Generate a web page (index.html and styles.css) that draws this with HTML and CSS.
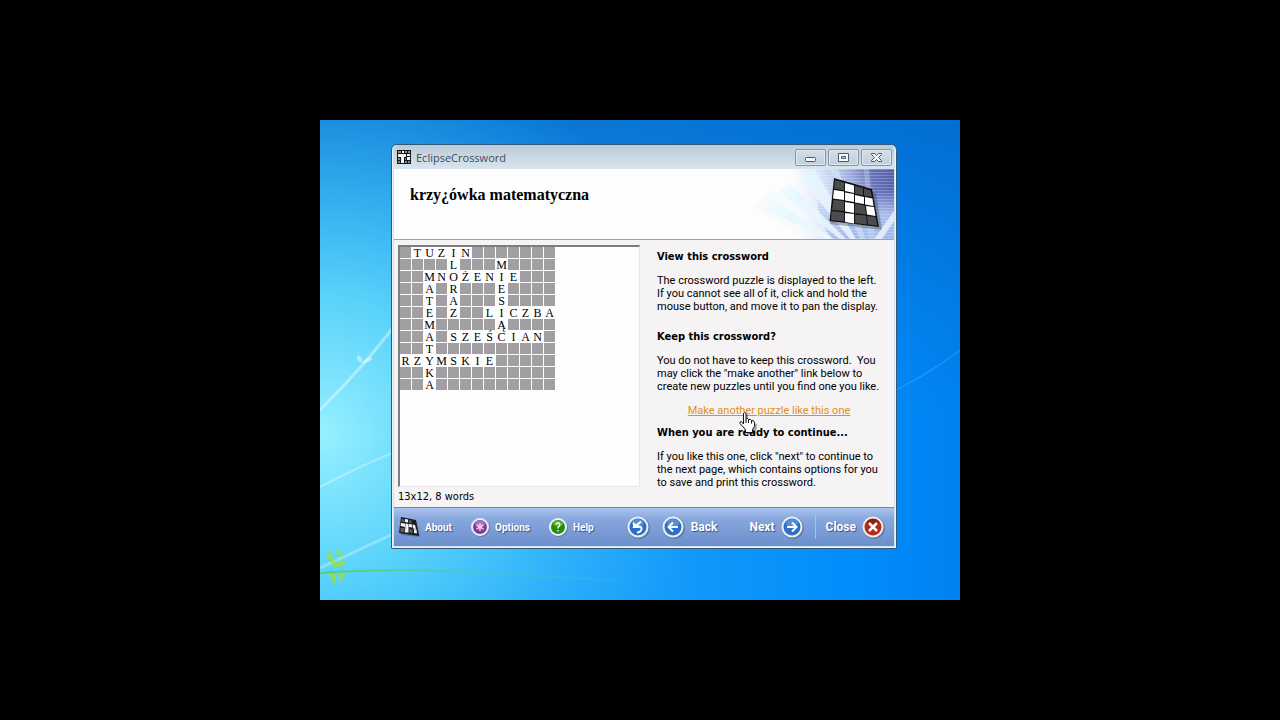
FILE: index.html
```
<!DOCTYPE html>
<html lang="en">
<head>
    <meta charset="UTF-8">
    <meta name="viewport" content="width=device-width, initial-scale=1.0">
    <title>EclipseCrossword</title>
    <link rel="stylesheet" href="styles.css">
</head>
<body>
    <div class="desktop">
        <svg class="wallpaper" viewBox="0 0 640 480" preserveAspectRatio="none" aria-hidden="true">
            <defs>
                <linearGradient id="sky" x1="0" y1="0" x2="1" y2="0">
                    <stop offset="0" stop-color="#27a9f0"/>
                    <stop offset="0.5" stop-color="#169cfa"/>
                    <stop offset="0.85" stop-color="#008cfa"/>
                    <stop offset="1" stop-color="#0082f0"/>
                </linearGradient>
                <linearGradient id="top-shade" x1="0" y1="0" x2="0" y2="1">
                    <stop offset="0" stop-color="#0464c4" stop-opacity="0.7"/>
                    <stop offset="0.6" stop-color="#0468c8" stop-opacity="0"/>
                </linearGradient>
                <radialGradient id="glow" gradientUnits="userSpaceOnUse" cx="0" cy="315" r="400">
                    <stop offset="0" stop-color="#98f0ff"/>
                    <stop offset="0.35" stop-color="#60d8fc" stop-opacity="0.9"/>
                    <stop offset="1" stop-color="#30b8ff" stop-opacity="0"/>
                </radialGradient>
                <linearGradient id="stem" x1="0" y1="0" x2="1" y2="0">
                    <stop offset="0" stop-color="#5fce6c"/>
                    <stop offset="1" stop-color="#3cc4dc" stop-opacity="0"/>
                </linearGradient>
            </defs>
            <rect width="640" height="480" fill="url(#sky)"/>
            <rect width="640" height="480" fill="url(#top-shade)"/>
            <rect width="640" height="480" fill="url(#glow)"/>
            <path d="M0 290 Q45 245 75 205" stroke="#fff" stroke-width="3" fill="none" opacity="0.4"/>
            <path d="M42 243 Q34 240 38 235 Q43 236 42 243 Q46 236 53 238 Q50 243 42 243Z" fill="#fff" opacity="0.45"/>
            <path d="M0 367 Q40 346 75 332" stroke="#fff" stroke-width="2" fill="none" opacity="0.3"/>
            <path d="M0 448 Q30 434 75 413" stroke="#fff" stroke-width="3" fill="none" opacity="0.3"/>
            <path d="M576 270 Q615 250 640 230" stroke="#8fd0ff" fill="none" opacity="0.35"/>
            <path d="M0 453 Q80 447 190 454 T340 462" stroke="url(#stem)" stroke-width="2" fill="none"/>
            <g fill="#9be23c" opacity="0.85">
                <path d="M16 447 Q6 440 7 431 Q15 436 16 447Z"/>
                <path d="M20 437 Q15 433 17 427 L21 434 L26 436Z"/>
                <path d="M12 447 Q18 439 27 441 Q24 447 12 447Z"/>
                <path d="M9 453 L16 455 L15 466Z"/>
                <path d="M18 453 L25 454 L20 463Z"/>
            </g>
        </svg>

        <div class="window">
            <div class="titlebar">
                <svg class="app-icon" width="14" height="14" viewBox="0 0 14 14" aria-hidden="true">
                    <rect width="14" height="14" fill="#15171a"/>
                    <path d="M5 1h2v2H5zM7 4h2v3H7zM1 4h3v3H1zM4 4h3v9H4zM10 4h3v2h-3zM10 7h3v3h-3z" fill="#f4f4f4"/>
                    <path d="M1 1h3v2H1zM8 1h2v2H8zM11 1h2v2h-2zM1 8h2v2H1zM8 8h1v2H8zM1 11h2v2H1zM8 11h2v2H8zM11 11h2v2h-2z" fill="#8a8a8c"/>
                </svg>
                <span class="window-title">EclipseCrossword</span>
                <div class="window-controls">
                    <button aria-label="Minimize">
                        <svg width="13" height="11" viewBox="0 0 13 11"><rect x="1.5" y="5.5" width="10" height="4" rx="1" fill="#f6f9fb" stroke="#4b5866"/></svg>
                    </button>
                    <button aria-label="Maximize">
                        <svg width="13" height="11" viewBox="0 0 13 11"><path d="M1.5 1.5h10v8h-10z" fill="#f6f9fb" stroke="#4b5866"/><path d="M4.5 4.5h4v2h-4z" fill="#c8d6e2" stroke="#4b5866"/></svg>
                    </button>
                    <button aria-label="Close window">
                        <svg width="13" height="11" viewBox="0 0 13 11"><path d="M1.5 1.5h3l2 2 2-2h3v1l-3 3 3 3v1h-3l-2-2-2 2h-3v-1l3-3-3-3z" fill="#f6f9fb" stroke="#4b5866"/></svg>
                    </button>
                </div>
            </div>

            <div class="client">
                <header class="banner">
                    <h1>krzy¿ówka matematyczna</h1>
                    <svg class="banner-art" width="160" height="70" viewBox="0 0 160 70" aria-hidden="true">
                        <defs>
                            <linearGradient id="art-fade" gradientUnits="userSpaceOnUse" x1="60" y1="30" x2="160" y2="10">
                                <stop offset="0" stop-color="#c9dcfa" stop-opacity="0"/>
                                <stop offset="0.45" stop-color="#a9bdec" stop-opacity="0.8"/>
                                <stop offset="0.8" stop-color="#6672b8"/>
                                <stop offset="1" stop-color="#5660aa"/>
                            </linearGradient>
                            <linearGradient id="art-low" x1="0" y1="0" x2="0" y2="1">
                                <stop offset="0.3" stop-color="#b4caf4" stop-opacity="0"/>
                                <stop offset="0.65" stop-color="#b4caf4" stop-opacity="0.85"/>
                                <stop offset="1" stop-color="#9fb8ea"/>
                            </linearGradient>
                            <linearGradient id="ray" gradientUnits="userSpaceOnUse" x1="20" y1="20" x2="100" y2="60">
                                <stop offset="0" stop-color="#e4fbff" stop-opacity="0"/>
                                <stop offset="0.5" stop-color="#e4f6ff" stop-opacity="0.8"/>
                                <stop offset="1" stop-color="#f2f8ff" stop-opacity="0.8"/>
                            </linearGradient>
                            <pattern id="scan" width="4" height="3" patternUnits="userSpaceOnUse">
                                <rect width="4" height="1" fill="#fff" opacity="0.22"/>
                            </pattern>
                        </defs>
                        <path d="M60 0H160V70H60z" fill="url(#art-fade)"/>
                        <path d="M90 0H160V70H98Q74 40 90 0z" fill="url(#art-low)"/>
                        <path d="M60 0H160V70H60z" fill="url(#scan)"/>
                        <path d="M20 38L36 22L60 18L110 70H70z" fill="#d9f4fc" opacity="0.15"/>
                        <g fill="url(#ray)">
                            <path d="M116 70L66 8L80 0L122 70z"/>
                            <path d="M106 70L44 22L56 14L112 70z"/>
                            <path d="M92 70L30 40L38 30L100 70z"/>
                        </g>
                        <path d="M126 70L96 0h8l28 70z" fill="#dfeafc" opacity="0.5"/>
                        <path d="M134 70L130 0h5l6 70z" fill="#dfeafc" opacity="0.3"/>
                        <path d="M140 70L160 42V52L148 70z" fill="#eef5ff" opacity="0.8"/>
                        <path d="M101 11L142 24L148 61L96 55z" fill="#223" opacity="0.3"/>
                        <path d="M100 9L138 20L145 58L95.5 52z" fill="#111"/>
                        <path d="M101 11L110 13.5V21.5L100 19.5zM121 17L129 19V26.5L121 24.5zM130 19.5L136.5 21.5L138 28L130 26.5zM99.5 31L110 32V42L98 41zM121 34.5L131 36.5L132 45.5L121 44zM97.5 42L110 43.5V52.5L97 51zM121 45.5L132 46.5L133 55.5L121 54zM133 47L141.5 48L143.5 56.5L134 55.5z" fill="#4c4c4e"/>
                        <path d="M111 14L120 16.5V24L111 22zM100 21L110 22.5V31L99 29.5zM111 23.5L120 25V33L111 31.5zM121 26L130 28V35L121 33.5zM131 28L138.5 29.5L139.5 37L131 35.5zM111 33L120 34.5V44L111 42.5zM132 37L140 38L141.5 47L133 45.5zM111 44L120 45V54.5L111 53z" fill="#fff"/>
                    </svg>
                </header>

                <main class="content">
                    <section class="preview">
                        <div class="canvas">
                            <table class="crossword" id="crossword"></table>
                        </div>
                        <p class="status">13x12, 8 words</p>
                    </section>

                    <section class="info">
                        <h2>View this crossword</h2>
                        <p>The crossword puzzle is displayed to the left.<br>If you cannot see all of it, click and hold the<br>mouse button, and move it to pan the display.</p>
                        <h2>Keep this crossword?</h2>
                        <p>You do not have to keep this crossword.&nbsp; You<br>may click the "make another" link below to<br>create new puzzles until you find one you like.</p>
                        <div class="another">
                            <a href="#">Make another puzzle like this one</a>
                            <svg class="cursor" width="20" height="24" viewBox="0 0 20 24" aria-hidden="true">
                                <path d="M6 4Q8 2 9 4V10L18 13V17L16 23H9L4 16z" fill="#000" opacity="0.3"/>
                                <path d="M4.5 13V2.5Q5.5 .5 7 2.5V8Q8.5 6.5 9.5 8.5Q11.5 7.5 12.5 9.5Q15 9 15.5 11.5V15.5L13.5 18.5V21.5H6.5V18.5L1 12.5Q0.5 10.5 2.5 10.5z" fill="#fff" stroke="#111"/>
                                <path d="M7 8v4M9.5 8.5V12M12.5 9.5V12.5" stroke="#111" fill="none"/>
                            </svg>
                        </div>
                        <h2>When you are ready to continue...</h2>
                        <p>If you like this one, click "next" to continue to<br>the next page, which contains options for you<br>to save and print this crossword.</p>
                    </section>
                </main>

                <footer class="toolbar">
                    <div class="tools">
                        <button>
                            <svg width="21" height="22" viewBox="0 0 21 22" aria-hidden="true">
                                <path d="M2 3L18 6L21 21L2 19z" fill="#234" opacity="0.35"/>
                                <path d="M2 1L17 4L20 20L0 17z" fill="#1b1d20"/>
                                <path d="M6 3l3 .5v3L6 6zM2 7l4 .5v3.5L1.5 10zM6.5 7.5l3 .5v8.5H6zM10 8l3 .5v3L10 11zM13.5 8.5l2.5.5 1 4-3-.5zM15 13l2.5.5.5 4-3-.5z" fill="#f2f2f2"/>
                                <path d="M10 4l2.5.5v3L10 7zM2.5 3L5.5 3.5V6L2.5 5.5zM1.5 12h4v4h-4zM10.5 13l3 .5V17l-3-.5z" fill="#5b6068"/>
                            </svg>
                            About
                        </button>
                        <button>
                            <svg width="19" height="22" viewBox="0 0 19 22" aria-hidden="true">
                                <circle cx="10" cy="12" r="9" fill="#345" opacity="0.35"/>
                                <circle cx="9" cy="11" r="8" fill="#7b3d98" stroke="#f1edf5" stroke-width="2"/>
                                <ellipse cx="9" cy="7.5" rx="5" ry="3" fill="#c39ad4" opacity="0.6"/>
                                <path d="M9 7v8M5.5 9l7 4M12.5 9l-7 4" stroke="#f0c8f4" stroke-width="1.5"/>
                            </svg>
                            Options
                        </button>
                        <button>
                            <svg width="19" height="22" viewBox="0 0 19 22" aria-hidden="true">
                                <circle cx="10" cy="12" r="9" fill="#345" opacity="0.35"/>
                                <circle cx="9" cy="11" r="8" fill="#278a12" stroke="#f1f5ed" stroke-width="2"/>
                                <ellipse cx="9" cy="7.5" rx="5" ry="3" fill="#9ad66c" opacity="0.5"/>
                                <path d="M7 8.5Q7.5 6.5 9.5 7Q11.5 8 10.5 9.5L9 11.5V12.5M9 14v1.5" stroke="#e8ffd8" stroke-width="1.5" fill="none"/>
                            </svg>
                            Help
                        </button>
                    </div>

                    <div class="nav">
                        <button aria-label="Start over">
                            <svg width="23" height="24" viewBox="0 0 23 24" aria-hidden="true">
                                <circle cx="12" cy="13" r="11" fill="#345" opacity="0.35"/>
                                <circle cx="11" cy="12" r="9.5" fill="#2c6ec8" stroke="#eceeec" stroke-width="2"/>
                                <ellipse cx="11" cy="8" rx="6" ry="4" fill="#8fbdf0" opacity="0.4"/>
                                <path d="M14 6.5L8 11.5H12Q15 12 14.5 14.5Q13.5 17.5 10 17.5" stroke="#fff" stroke-width="2" fill="none"/>
                                <path d="M6 6.500V13H12.500z" fill="#fff"/>
                            </svg>
                        </button>
                        <button class="back">
                            <svg width="23" height="24" viewBox="0 0 23 24" aria-hidden="true">
                                <circle cx="12" cy="13" r="11" fill="#345" opacity="0.35"/>
                                <circle cx="11" cy="12" r="9.5" fill="#2c6ec8" stroke="#eceeec" stroke-width="2"/>
                                <ellipse cx="11" cy="8" rx="6" ry="4" fill="#8fbdf0" opacity="0.4"/>
                                <path d="M16 12H7M11 7.5L6.5 12L11 16.5" stroke="#fff" stroke-width="2" fill="none"/>
                            </svg>
                            Back
                        </button>
                        <button class="next">
                            Next
                            <svg width="23" height="24" viewBox="0 0 23 24" aria-hidden="true">
                                <circle cx="12" cy="13" r="11" fill="#345" opacity="0.35"/>
                                <circle cx="11" cy="12" r="9.5" fill="#2c6ec8" stroke="#eceeec" stroke-width="2"/>
                                <ellipse cx="11" cy="8" rx="6" ry="4" fill="#8fbdf0" opacity="0.4"/>
                                <path d="M6 12H15M11 7.5L15.5 12L11 16.5" stroke="#fff" stroke-width="2" fill="none"/>
                            </svg>
                        </button>
                        <button class="close">
                            Close
                            <svg width="23" height="24" viewBox="0 0 23 24" aria-hidden="true">
                                <circle cx="12" cy="13" r="11" fill="#345" opacity="0.35"/>
                                <circle cx="11" cy="12" r="9.5" fill="#b42a18" stroke="#eceeec" stroke-width="2"/>
                                <ellipse cx="11" cy="7.5" rx="6" ry="3.5" fill="#6d1208" opacity="0.5"/>
                                <path d="M7 8L15 16M15 8L7 16" stroke="#fff" stroke-width="2.5" fill="none"/>
                            </svg>
                        </button>
                    </div>
                </footer>
            </div>
        </div>
    </div>

    <script>
        // "." is a filled square
        const rows = [
            '.TUZIN.......',
            '....L...M....',
            '..MNOŻENIE...',
            '..A.R...E....',
            '..T.A...S....',
            '..E.Z..LICZBA',
            '..M.....Ą....',
            '..A.SZEŚCIAN.',
            '..T..........',
            'RZYMSKIE.....',
            '..K..........',
            '..A..........'
        ];

        document.getElementById('crossword').innerHTML = rows
            .map(row => '<tr>' + [...row]
                .map(c => c === '.' ? '<td class="filled"></td>' : `<td>${c}</td>`)
                .join('') + '</tr>')
            .join('');
    </script>
</body>
</html>
```
FILE: styles.css
```
* {
    box-sizing: border-box;
}

body {
    margin: 0;
    min-height: 100vh;
    display: flex;
    align-items: center;
    justify-content: center;
    background: #000;
    font-family: "DejaVu Sans Condensed", "DejaVu Sans", sans-serif;
    font-size: 11px;
    line-height: 13px;
    color: #000;
}

h1, h2, p {
    margin: 0;
}

button {
    margin: 0;
    padding: 0;
    border: 0;
    background: none;
    cursor: pointer;
}

svg {
    display: block;
    flex: none;
}

.desktop {
    position: relative;
    width: 50%;
    min-width: 640px;
    aspect-ratio: 4 / 3;
    overflow: hidden;
}

.wallpaper {
    width: 100%;
    height: 100%;
}

.window {
    position: absolute;
    left: 71px;
    top: 24px;
    width: 506px;
    padding: 0 2px 2px;
    border: 1px solid #34587a;
    border-radius: 6px 6px 1px 1px;
    background: #d3e2ee;
    box-shadow: inset 0 0 0 1px #eaf4fa;
}

/* title bar */
.titlebar {
    display: flex;
    align-items: center;
    height: 24px;
    padding: 0 2px 0 3px;
    background: linear-gradient(#bccbd8, #d8e5ee);
    border-radius: 5px 5px 0 0;
}

.window-title {
    margin-left: 5px;
    font-family: "Open Sans", "Noto Sans", sans-serif;
    color: #3f4c5c;
}

.window-controls {
    display: flex;
    gap: 2px;
    margin-left: auto;
}

.window-controls button {
    display: flex;
    align-items: center;
    justify-content: center;
    width: 31px;
    height: 17px;
    border: 1px solid #8495a6;
    border-radius: 2px;
    background: linear-gradient(#d3dfe9, #bfcfdd);
    box-shadow: inset 0 0 0 1px #dde8f0;
}

/* banner */
.client {
    background: #f5f3f4;
}

.banner {
    display: flex;
    justify-content: space-between;
    background: #fefdfe;
    border-bottom: 1px solid #9ba3a8;
}

.banner h1 {
    padding: 16px 0 0 16px;
    font-family: "Liberation Serif", serif;
    font-size: 16px;
    line-height: 20px;
}

/* crossword and help text */
.content {
    display: flex;
    gap: 17px;
    padding: 5px 4px 4px;
}

.canvas {
    width: 242px;
    height: 242px;
    border: 1px solid #e8e6e8;
    border-top: 2px solid #7e7c7e;
    border-left: 2px solid #7e7c7e;
    background: #fefdfe;
}

.crossword {
    border-spacing: 0;
    font-family: "Liberation Serif", serif;
    font-size: 12px;
    line-height: 10px;
    text-align: center;
}

.crossword td {
    width: 12px;
    height: 12px;
    padding: 1px 0 0;
    border: solid #fefdfe;
    border-width: 0 1px 1px 0;
}

.crossword .filled {
    background: #a19fa1;
}

.status {
    padding-top: 3px;
}

.info {
    flex: 1;
    padding-top: 5px;
}

.info h2 {
    margin-bottom: 11px;
    font-size: 11px;
    line-height: 13px;
}

.info p, .another {
    font-family: Roboto, "Open Sans", sans-serif;
}

.info p + h2 {
    margin-top: 17px;
}

.another {
    position: relative;
    width: 224px;
    margin: 11px 0 9px;
    text-align: center;
}

.another a {
    color: #e0901c;
}

.cursor {
    position: absolute;
    left: 82px;
    top: 7px;
}

/* toolbar */
.toolbar {
    display: flex;
    align-items: center;
    justify-content: space-between;
    height: 39px;
    padding: 0 9px 0 5px;
    border-top: 1px solid #74869c;
    background: linear-gradient(#a9c3ee, #86a6dc 30%, #6c8fcd);
}

.tools, .nav {
    display: flex;
    align-items: center;
}

.tools {
    gap: 19px;
}

.toolbar button {
    display: flex;
    align-items: center;
    gap: 5px;
    font-family: Roboto, "Open Sans", sans-serif;
    font-size: 10px;
    font-weight: 700;
    color: #fff;
    text-shadow: 1px 1px 1px #34508c;
}

.nav button {
    gap: 6px;
    font-size: 12px;
}

.nav .back {
    margin-left: 12px;
}

.nav .next {
    margin-left: 32px;
    margin-right: 11px;
}

.nav .close {
    padding-left: 10px;
    border-left: 1px solid #a9c2ec;
}
```
